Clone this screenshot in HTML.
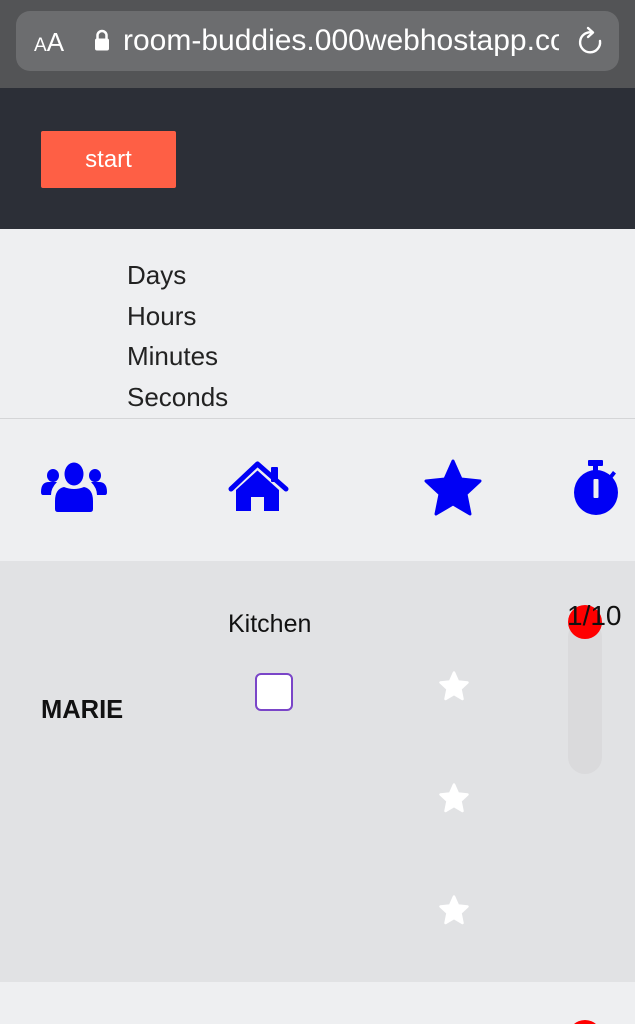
<!DOCTYPE html>
<html style="overflow:hidden;height:1024px"><head><meta charset="utf-8"><style>
*{margin:0;padding:0;box-sizing:border-box}
body{width:635px;height:1024px;overflow:hidden;background:#eeeff1;font-family:"Liberation Sans",sans-serif;position:relative}
.abs{position:absolute}
</style></head><body>
<div class="abs" style="left:0;top:0;width:635px;height:88px;background:#535456"></div>
<div class="abs" style="left:16px;top:11px;width:603px;height:60px;border-radius:14px;background:#6c6d6f"></div>
<div class="abs" style="left:34px;top:27px;color:#fff;font-size:26px;"><span style="font-size:19px">A</span>A</div>
<svg class="abs" style="left:94px;top:29px" width="16" height="22" viewBox="0 0 16 22"><path d="M3.5 10V6.5a4.5 4.5 0 0 1 9 0V10" stroke="#fff" stroke-width="2.5" fill="none"/><rect x="1" y="9.5" width="14" height="12" rx="2" fill="#fff"/></svg>
<div class="abs" style="left:123px;top:24px;width:436px;overflow:hidden;white-space:nowrap;color:#fff;font-size:30px;">room-buddies.000webhostapp.com</div>
<svg class="abs" style="left:575px;top:26px" width="30" height="32" viewBox="0 0 30 32"><path d="M17 6.5A10 10 0 1 0 25 15" stroke="#fff" stroke-width="2.4" fill="none" stroke-linecap="round"/><path d="M13 2l5 4.5-5 4.5" stroke="#fff" stroke-width="2.4" fill="none" stroke-linecap="round" stroke-linejoin="round"/></svg>
<div class="abs" style="left:0;top:88px;width:635px;height:141px;background:#2c2f37"></div>
<div class="abs" style="left:41px;top:131px;width:135px;height:57px;background:#fe5f45;color:#fff;font-size:24px;text-align:center;line-height:57px;border-radius:2px">start</div>
<div class="abs" style="left:127px;top:255px;color:#222;font-size:26px;line-height:40.5px">Days<br>Hours<br>Minutes<br>Seconds</div>
<div class="abs" style="left:0;top:418px;width:635px;height:1px;background:#d4d5d7"></div>
<svg class="abs" style="left:40px;top:462px" width="68" height="50" viewBox="0 0 68 50"><g fill="#0000f5"><ellipse cx="34" cy="12" rx="9.5" ry="11.5"/><ellipse cx="13" cy="13.5" rx="6" ry="6.5"/><ellipse cx="55" cy="13.5" rx="6" ry="6.5"/><path d="M1 30q0-10 8-10h8q-6 6-6 13H3q-2 0-2-3z"/><path d="M67 30q0-10-8-10h-8q6 6 6 13h8q2 0 2-3z"/><path d="M24 25q5 2 10 2t10-2q9 2 9 14v8q0 3-3 3H18q-3 0-3-3v-8q0-12 9-14z"/></g></svg>
<svg class="abs" style="left:0;top:0" width="635" height="560" viewBox="0 0 635 560">
<g fill="#0000f5">
<path d="M231 489L257.5 464L286 489" stroke="#0000f5" stroke-width="5" fill="none" stroke-linecap="round" stroke-linejoin="round"/>
<rect x="271" y="467" width="7" height="15" rx="1"/>
<path d="M236 490L257.5 470.5L279 490V511H264V497H251V511H236z"/>
<rect x="588" y="460" width="15" height="6" rx="1"/>
<rect x="593" y="465" width="5" height="7"/>
<path d="M609 476l4-5 3 2.5-4 5z"/>
<ellipse cx="596" cy="492.5" rx="22" ry="22.5"/>
</g>
<rect x="593.5" y="479" width="5" height="19" rx="1" fill="#eeeff1"/>
</svg>
<svg class="abs" style="left:423px;top:459px" width="60" height="58" viewBox="0 0 60 58"><path d="M30 2l8 18 19 2-14 13 4 20-17-10-17 10 4-20L3 22l19-2z" fill="#0000f5" stroke="#0000f5" stroke-width="3" stroke-linejoin="round"/></svg>
<div class="abs" style="left:0;top:561px;width:635px;height:421px;background:#e1e2e4"></div>
<div class="abs" style="left:228px;top:610px;font-size:25px;color:#111">Kitchen</div>
<div class="abs" style="left:255px;top:673px;width:38px;height:38px;border:2px solid #7a45c8;border-radius:6px;background:#fff"></div>
<div class="abs" style="left:41px;top:696px;font-size:25.5px;font-weight:bold;color:#111">MARIE</div>
<svg class="abs" style="left:439px;top:671px" width="30" height="30" viewBox="0 0 60 58"><path d="M30 2l8 18 19 2-14 13 4 20-17-10-17 10 4-20L3 22l19-2z" fill="#fff" stroke="#fff" stroke-width="5" stroke-linejoin="round"/></svg>
<svg class="abs" style="left:439px;top:783px" width="30" height="30" viewBox="0 0 60 58"><path d="M30 2l8 18 19 2-14 13 4 20-17-10-17 10 4-20L3 22l19-2z" fill="#fff" stroke="#fff" stroke-width="5" stroke-linejoin="round"/></svg>
<svg class="abs" style="left:439px;top:895px" width="30" height="30" viewBox="0 0 60 58"><path d="M30 2l8 18 19 2-14 13 4 20-17-10-17 10 4-20L3 22l19-2z" fill="#fff" stroke="#fff" stroke-width="5" stroke-linejoin="round"/></svg>
<div class="abs" style="left:568px;top:620px;width:34px;height:154px;border-radius:17px;background:#dadadc"></div>
<div class="abs" style="left:568px;top:605px;width:34px;height:34px;border-radius:50%;background:#f00"></div>
<div class="abs" style="left:567px;top:600px;font-size:28px;color:#111">1/10</div>
<div class="abs" style="left:568px;top:1020px;width:34px;height:4px;overflow:hidden"><div style="width:34px;height:34px;border-radius:50%;background:#f00"></div></div>
</body></html>
